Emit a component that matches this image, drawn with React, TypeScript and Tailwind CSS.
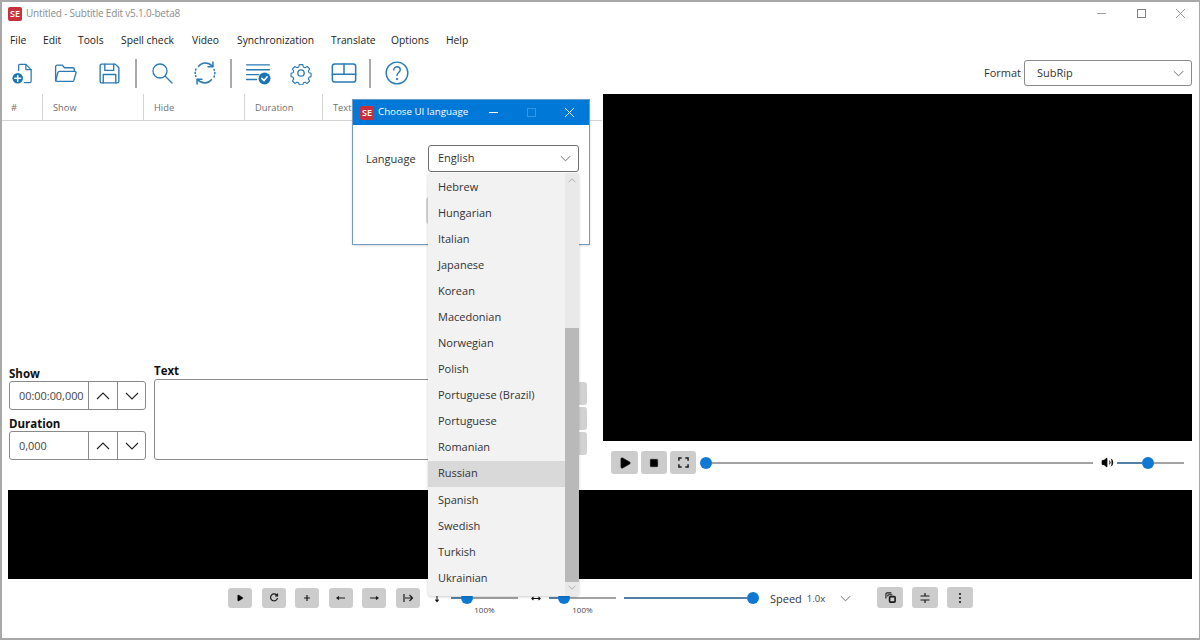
import React from "react";
import { Play, Square, Volume2 } from "lucide-react";

const languages = [
  "Hebrew",
  "Hungarian",
  "Italian",
  "Japanese",
  "Korean",
  "Macedonian",
  "Norwegian",
  "Polish",
  "Portuguese (Brazil)",
  "Portuguese",
  "Romanian",
  "Russian",
  "Spanish",
  "Swedish",
  "Turkish",
  "Ukrainian",
];

const menus = [
  { label: "File", w: "w-[33px]" },
  { label: "Edit", w: "w-[35px]" },
  { label: "Tools", w: "w-[43px]" },
  { label: "Spell check", w: "w-[71px]" },
  { label: "Video", w: "w-[45px]" },
  { label: "Synchronization", w: "w-[94px]" },
  { label: "Translate", w: "w-[60px]" },
  { label: "Options", w: "w-[55px]" },
  { label: "Help", w: "w-[40px]" },
];

const Logo = () => (
  <span className="w-[14px] h-[14px] bg-[#c8313c] rounded-[2px] flex items-center justify-center text-white text-[9px] font-semibold leading-none shrink-0">
    SE
  </span>
);

const Chevron = ({ up = false, className = "" }: { up?: boolean; className?: string }) => (
  <svg viewBox="0 0 14 8" className={className} fill="none" stroke="currentColor" strokeWidth="1.1">
    <path d={up ? "M1 7L7 1l6 6" : "M1 1l6 6 6-6"} />
  </svg>
);

const ToolIcon = ({ children, className }: { children: React.ReactNode; className: string }) => (
  <svg viewBox="0 0 24 24" className={`${className} shrink-0`} fill="none" stroke="#2a7ab5" strokeWidth="1.3" strokeLinejoin="round" strokeLinecap="round">
    {children}
  </svg>
);

const Separator = ({ className }: { className: string }) => (
  <div className={`w-[2px] h-[29px] bg-[#a9a9a9] shrink-0 ${className}`} />
);

const Spinner = ({ value }: { value: string }) => (
  <div className="flex h-[29px] w-[137px] border border-[#8a8a8a] rounded-[3px] shrink-0">
    <div className="w-[78px] pl-[9px] pt-[1px] flex items-center text-[10.9px] text-[#444] whitespace-nowrap">{value}</div>
    <div className="w-[29px] border-l border-[#8a8a8a] flex items-center justify-center text-[#222]">
      <Chevron up className="w-[14px] h-[8px]" />
    </div>
    <div className="flex-1 border-l border-[#8a8a8a] flex items-center justify-center text-[#222]">
      <Chevron className="w-[14px] h-[8px]" />
    </div>
  </div>
);

const Slider = ({ width, fill }: { width: string; fill: string }) => (
  <div className={`flex items-center h-3 shrink-0 ${width}`}>
    <div className={`h-[2px] bg-[#5580a5] ${fill}`} />
    <div className="w-3 h-3 rounded-full bg-[#0f78d4] shrink-0" />
    <div className="h-[2px] flex-1 bg-[#a3a3a3]" />
  </div>
);

const SmallButton = ({ children, width = "w-6 h-[20px]" }: { children: React.ReactNode; width?: string }) => (
  <div className={`${width} bg-[#cccccc] rounded-[3px] flex items-center justify-center text-[#1a1a1a] shrink-0`}>
    {children}
  </div>
);

const Glyph = ({ d }: { d: string }) => (
  <svg viewBox="0 0 12 12" className="w-[12px] h-[12px]" fill="none" stroke="currentColor" strokeWidth="1.2">
    <path d={d} />
  </svg>
);

export default function App() {
  return (
    <div
      className="relative w-[1200px] h-[640px] overflow-hidden bg-white border-t-2 border-l-2 border-b-2 border-r border-[#a8a8a8] flex flex-col text-[#222]"
      style={{ fontFamily: '"Open Sans", sans-serif' }}
    >
      {/* title bar */}
      <div className="h-[23px] flex items-center pl-[6px] shrink-0">
        <Logo />
        <span className="ml-[4px] text-[10px] tracking-[-0.2px] text-[#8c8c8c]">Untitled - Subtitle Edit v5.1.0-beta8</span>
        <div className="ml-auto flex items-center text-[#8c8c8c]">
          <div className="w-[9px] h-[1.5px] bg-[#a0a0a0]" />
          <div className="ml-[31px] w-[9px] h-[9px] border border-[#808080]" />
          <svg viewBox="0 0 10 10" className="ml-[30px] mr-[14px] w-[9px] h-[9px]" stroke="#808080" strokeWidth="0.9">
            <path d="M0 0l10 10M10 0L0 10" />
          </svg>
        </div>
      </div>

      {/* menu */}
      <div className="h-[24px] flex items-center pl-[8px] text-[10.3px] shrink-0 mt-[4px]">
        {menus.map((m) => (
          <span key={m.label} className={`${m.w} shrink-0 whitespace-nowrap`}>
            {m.label}
          </span>
        ))}
      </div>

      {/* toolbar */}
      <div className="h-[36px] flex items-center pl-[9px] pr-[7px] shrink-0 mt-[2px]">
        <ToolIcon className="w-[23px] h-[23px]">
          <path d="M8 9V3.500C8 3 8.500 2.500 9 2.500h6.500L21 8v12c0 .8-.6 1.500-1.500 1.500H14" />
          <path d="M15.500 2.500V8H21" />
          <circle cx="7" cy="17" r="5.500" fill="#1b74b3" stroke="none" />
          <path d="M7 14v6M4 17h6" stroke="#fff" strokeWidth="1.6" />
        </ToolIcon>
        <ToolIcon className="ml-[19px] w-[25px] h-[25px]">
          <path d="M2.500 19V5.500c0-.8.6-1.500 1.500-1.500h5l2 2.500h8c.8 0 1.500.7 1.500 1.500v2" />
          <path d="M2.500 19l2.200-8c.2-.6.7-1 1.300-1h15c.8 0 1.300.7 1.100 1.400L20 18.600c-.2.6-.7 1-1.300 1H4c-.8 0-1.500-.6-1.500-.6z" />
        </ToolIcon>
        <ToolIcon className="ml-[19px] w-[25px] h-[25px]">
          <path d="M3 4.500C3 3.700 3.700 3 4.500 3h13L21 6.500v13c0 .8-.7 1.500-1.500 1.500h-15C3.700 21 3 20.300 3 19.500z" />
          <path d="M7.500 3v6h8.500V3M6 21v-8h12v8" />
        </ToolIcon>
        <Separator className="ml-[13px]" />
        <ToolIcon className="ml-[13px] w-[24px] h-[24px]">
          <circle cx="10" cy="10" r="7" />
          <path d="M15.500 15.500L22 22" />
        </ToolIcon>
        <ToolIcon className="ml-[17px] w-[28px] h-[28px]">
          <path d="M6.500 6.300C8 4.500 9.800 3.500 12 3.500c2.500 0 4.700 1 6.500 2.800" />
          <path d="M18.800 2.500v4.200h-4.200" />
          <path d="M17.500 17.700C16 19.500 14.200 20.500 12 20.500c-2.500 0-4.700-1-6.500-2.800" />
          <path d="M5.200 21.500v-4.200h4.200" />
          <path d="M4.200 8.500L3.500 12l.7 3M19.800 15.500l.7-3.500-.7-3" strokeDasharray="1 2" />
        </ToolIcon>
        <Separator className="ml-[11px]" />
        <ToolIcon className="ml-[13px] w-[26px] h-[26px]">
          <path d="M1.500 4.500h21M1.500 9h21M1.500 13.500h11M1.500 18h9" />
          <circle cx="18" cy="17" r="5.500" fill="#1b74b3" stroke="none" />
          <path d="M15.500 17l2 2 3-3.500" stroke="#fff" strokeWidth="1.500" />
        </ToolIcon>
        <ToolIcon className="ml-[18px] w-[24px] h-[24px]">
          <circle cx="12" cy="12" r="3.200" />
          <path d="M10 2.500h4l.7 2.900 1.900.8 2.500-1.500 2.800 2.800-1.500 2.500.8 1.900 2.300.6v3.900l-2.300.6-.8 1.900 1.500 2.500-2.800 2.800-2.500-1.500-1.900.8-.7 2.300h-4l-.7-2.300-1.900-.8-2.500 1.500-2.800-2.800 1.500-2.500-.8-1.900-2.300-.6v-3.900l2.300-.6.8-1.900-1.500-2.500 2.800-2.800 2.500 1.500 1.900-.8z" transform="translate(1.600 1.400) scale(.87)" />
        </ToolIcon>
        <ToolIcon className="ml-[17px] w-[28px] h-[28px]">
          <rect x="2" y="4.250" width="20" height="15.500" rx="2" />
          <path d="M2 13h20M12 4.250V13" />
        </ToolIcon>
        <Separator className="ml-[11px]" />
        <ToolIcon className="ml-[13px] w-[26px] h-[26px]">
          <circle cx="12" cy="12" r="10" />
          <path d="M9 9.200C9 7.400 10.300 6.300 12 6.300s3 1.100 3 2.700c0 2.500-3 2.600-3 5.200" />
          <path d="M12 17.300v.4" strokeWidth="1.800" />
        </ToolIcon>

        <span className="ml-auto text-[11px] text-[#333]">Format</span>
        <div className="ml-[3px] w-[168px] h-[26px] border border-[#8a8a8a] rounded-[3px] flex items-center pl-[12px] pr-[7px] text-[11px] text-[#333]">
          SubRip
          <Chevron className="ml-auto w-[11px] h-[7px] text-[#555]" />
        </div>
      </div>

      {/* list + video */}
      <div className="flex h-[392px] shrink-0 mt-[3px]">
        <div className="w-[600px] shrink-0 flex flex-col">
          <div className="h-[27px] flex border-b border-[#d4d4d4] text-[9.3px] text-[#6f6f6f] shrink-0">
            <div className="w-[41px] pl-[9px] pt-[2px] flex items-center border-r border-[#d4d4d4]">#</div>
            <div className="w-[101px] pl-[10px] pt-[2px] flex items-center border-r border-[#d4d4d4]">Show</div>
            <div className="w-[101px] pl-[10px] pt-[2px] flex items-center border-r border-[#d4d4d4]">Hide</div>
            <div className="w-[78px] pl-[10px] pt-[2px] flex items-center border-r border-[#d4d4d4]">Duration</div>
            <div className="flex-1 pl-[10px] pt-[2px] flex items-center">Text</div>
          </div>
          <div className="flex-1" />
          <div className="flex h-[96px] shrink-0 pl-[7px] mb-[26px]">
            <div className="w-[137px] shrink-0 flex flex-col">
              <div className="h-[14px] mt-[3px] text-[11.5px] font-bold leading-[14px] text-[#111]">Show</div>
              <Spinner value="00:00:00,000" />
              <div className="h-[14px] mt-[7px] text-[11.5px] font-bold leading-[14px] text-[#111]">Duration</div>
              <Spinner value="0,000" />
            </div>
            <div className="ml-[8px] flex-1 flex flex-col">
              <div className="h-[13px] text-[11.5px] font-bold leading-[13px] text-[#111]">Text</div>
              <div className="mt-[2px] flex-1 w-[300px] border border-[#8a8a8a] rounded-[3px]" />
            </div>
            <div className="w-[9px] mr-[15px] flex flex-col gap-[2px] pt-[18px] shrink-0">
              <div className="h-[23px] bg-[#d2d2d2] rounded-r-[3px]" />
              <div className="h-[23px] bg-[#d2d2d2] rounded-r-[3px]" />
              <div className="h-[23px] bg-[#d2d2d2] rounded-r-[3px]" />
            </div>
          </div>
        </div>

        <div className="flex-1 flex flex-col pr-[7px] pl-[1px]">
          <div className="h-[347px] bg-black shrink-0" />
          <div className="flex items-center mt-[10px] pl-[8px] gap-[3px]">
            <SmallButton width="w-[27px] h-[23px]">
              <Play className="w-[14px] h-[14px] fill-black" strokeWidth={1} />
            </SmallButton>
            <SmallButton width="w-[26px] h-[23px]">
              <Square className="w-[10px] h-[10px] fill-black" strokeWidth={1} />
            </SmallButton>
            <SmallButton width="w-[26px] h-[23px]">
              <svg viewBox="0 0 12 12" className="w-[11px] h-[11px]" fill="none" stroke="currentColor" strokeWidth="1.6">
                <path d="M1 4V1h3M8 1h3v3M11 8v3H8M4 11H1V8" />
              </svg>
            </SmallButton>
            <Slider width="w-[393px] ml-[1px]" fill="w-0" />
            <Volume2 className="ml-[5px] w-[13px] h-[13px] fill-black text-black shrink-0" strokeWidth={1.5} />
            <Slider width="w-[67px]" fill="w-[25px]" />
          </div>
        </div>
      </div>

      {/* waveform */}
      <div className="h-[89px] ml-[6px] mr-[7px] bg-black shrink-0 mt-[4px]" />

      {/* bottom controls */}
      <div className="flex items-start pl-[226px] pt-[9px] shrink-0">
        <div className="flex gap-[9.6px]">
          <SmallButton><Play className="w-[8px] h-[8px] fill-black" strokeWidth={1} /></SmallButton>
          <SmallButton><Glyph d="M9 3.500A3.500 3.500 0 1 0 9.500 6M9.500 1.500v2.500H7" /></SmallButton>
          <SmallButton><Glyph d="M6 3v6M3 6h6" /></SmallButton>
          <SmallButton><Glyph d="M2 6h8M4 4.500L2 6l2 1.500" /></SmallButton>
          <SmallButton><Glyph d="M2 6h8M8 4.500L10 6 8 7.500" /></SmallButton>
          <SmallButton><Glyph d="M2 2v8M3 6h7M7.500 3L10.500 6l-3 3" /></SmallButton>
        </div>
        <div className="ml-[12px] w-[10px] h-[20px] flex items-center justify-center text-[#111]">
          <svg viewBox="0 0 10 12" className="w-[8px] h-[10px]" fill="none" stroke="currentColor" strokeWidth="1.3">
            <path d="M2 1h6M5 1v9M3 8l2 2.500L7 8" />
          </svg>
        </div>
        <div className="ml-[9px] w-[67px] flex flex-col items-center">
          <Slider width="w-[67px] mt-[4px]" fill="w-[10px]" />
          <span className="text-[8px] leading-[10px] mt-[1px] text-[#444]">100%</span>
        </div>
        <div className="ml-[13px] w-[10px] h-[20px] flex items-center justify-center text-[#111]">
          <svg viewBox="0 0 12 8" className="w-[10px] h-[7px]" fill="none" stroke="currentColor" strokeWidth="1.3">
            <path d="M1 4h10M3 2L1 4l2 2M9 2l2 2-2 2" />
          </svg>
        </div>
        <div className="ml-[8px] w-[67px] flex flex-col items-center">
          <Slider width="w-[67px] mt-[4px]" fill="w-[9px]" />
          <span className="text-[8px] leading-[10px] mt-[1px] text-[#444]">100%</span>
        </div>
        <Slider width="w-[135px] ml-[8px] mt-[4px]" fill="w-[123px]" />
        <span className="ml-[11px] mt-[1px] text-[11px] text-[#333] leading-[20px]">Speed</span>
        <span className="ml-[5px] mt-[1px] text-[9.5px] text-[#444] leading-[20px]">1.0x</span>
        <Chevron className="ml-[15px] mt-[7px] w-[11px] h-[7px] text-[#555]" />
        <div className="ml-[26px] -mt-[1px] flex gap-[9px]">
          <SmallButton width="w-[26px] h-[21px]">
            <svg viewBox="0 0 12 12" className="w-[11px] h-[11px]" fill="none" stroke="currentColor" strokeWidth="1.200">
              <path d="M1 7V2.500C1 1.700 1.700 1 2.500 1H7" />
              <path d="M3 5V4c0-.6.400-1 1-1h4" />
              <rect x="5" y="5" width="6" height="6" rx="1" strokeWidth="1.800" />
            </svg>
          </SmallButton>
          <SmallButton width="w-[26px] h-[21px]"><Glyph d="M1.500 4h9M1.500 8h9M6 1v3M6 8v3" /></SmallButton>
          <SmallButton width="w-[26px] h-[21px]">
            <svg viewBox="0 0 4 12" className="w-[4px] h-[12px]" fill="currentColor">
              <circle cx="2" cy="2" r="1.100" />
              <circle cx="2" cy="6" r="1.100" />
              <circle cx="2" cy="10" r="1.100" />
            </svg>
          </SmallButton>
        </div>
      </div>

      {/* language dialog */}
      <div className="absolute left-[350px] top-[97px] w-[238px] h-[146px] bg-white border border-[#6f9cc4] shadow-sm">
        <div className="h-[25px] bg-[#0078d7] flex items-center pl-[7px] text-white">
          <Logo />
          <span className="ml-[4px] text-[9.75px]">Choose UI language</span>
          <div className="ml-auto w-[9px] h-[1px] bg-white" />
          <div className="ml-[29px] w-[9px] h-[9px] border border-[#3a96e0]" />
          <svg viewBox="0 0 10 10" className="ml-[29px] mr-[15px] w-[9px] h-[9px]" stroke="#fff" strokeWidth="1">
            <path d="M0 0l10 10M10 0L0 10" />
          </svg>
        </div>
        <div className="flex pl-[13px] pt-[20px]">
          <span className="w-[62px] text-[11px] leading-[28px] text-[#333]">Language</span>
          <div className="w-[151px] h-[27px] border border-[#707070] rounded-[3px] flex items-center pl-[9px] pr-[7px] pb-[1px] text-[11px] text-[#333] bg-white">
            English
            <Chevron className="ml-auto w-[11px] h-[7px] text-[#555]" />
          </div>
        </div>
        <div className="absolute left-[73px] top-[97px] w-[6px] h-[27px] bg-[#d6d6d6] rounded-l-[3px]" />
      </div>

      {/* open dropdown */}
      <div className="absolute left-[426px] top-[171px] w-[151px] h-[423px] bg-[#f2f2f2] rounded-b-[4px] shadow-[0_1px_3px_rgba(0,0,0,0.2)] flex overflow-hidden">
        <div className="w-[137px] pt-[1px]">
          {languages.map((lang) => (
            <div
              key={lang}
              className={`h-[26.07px] pl-[10px] flex items-center text-[11px] text-[#333] whitespace-nowrap ${lang === "Russian" ? "bg-[#d9d9d9]" : ""}`}
            >
              {lang}
            </div>
          ))}
        </div>
        <div className="w-[14px] bg-[#e9e9e9] flex flex-col items-center">
          <Chevron up className="mt-[5px] w-[8px] h-[5px] text-[#8a8a8a]" />
          <div className="mt-[145px] w-full h-[254px] bg-[#b9b9b9]" />
          <Chevron className="mt-[3px] w-[8px] h-[5px] text-[#8a8a8a]" />
        </div>
      </div>
    </div>
  );
}
